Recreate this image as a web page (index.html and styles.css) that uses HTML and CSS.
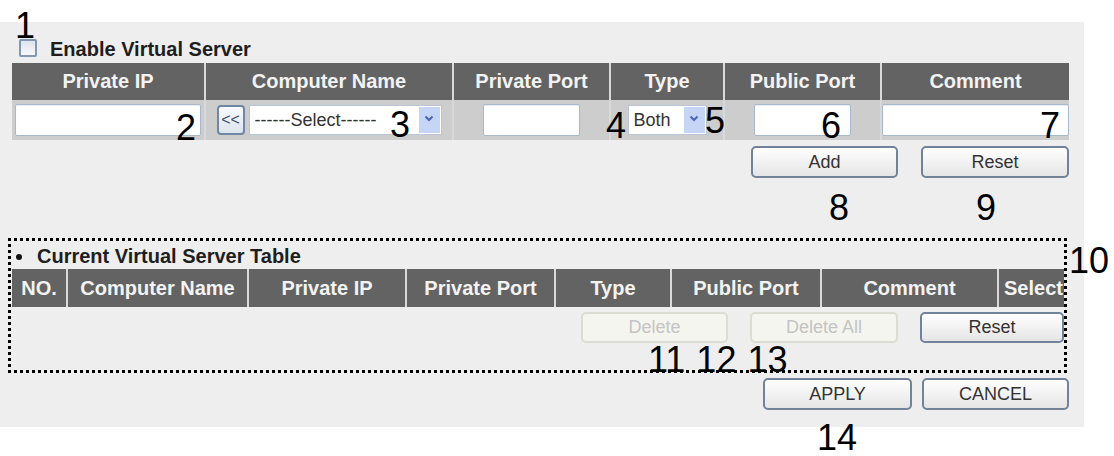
FILE: index.html
```html
<!DOCTYPE html>
<html lang="en">
<head>
    <meta charset="UTF-8">
    <title>Virtual Server</title>
    <link rel="stylesheet" href="styles.css">
</head>
<body>
    <div class="panel">
        <label class="enable"><span class="check"></span> Enable Virtual Server</label>

        <div class="entry">
            <div class="row head">
                <div class="cell w-ip">Private IP</div>
                <div class="cell w-name">Computer Name</div>
                <div class="cell w-port">Private Port</div>
                <div class="cell w-type">Type</div>
                <div class="cell w-pub">Public Port</div>
                <div class="cell w-note">Comment</div>
            </div>
            <div class="row fields">
                <div class="cell w-ip"><input type="text" class="text ip"></div>
                <div class="cell w-name">
                    <button class="back">&lt;&lt;</button>
                    <div class="select name-select">
                        <span class="value">------Select------</span>
                        <span class="arrow"><svg width="10" height="7" viewBox="0 0 10 7"><path d="M1.5 1.5 L5 5 L8.5 1.5" fill="none" stroke="#4568b5" stroke-width="2"/></svg></span>
                    </div>
                </div>
                <div class="cell w-port"><input type="text" class="text port"></div>
                <div class="cell w-type">
                    <div class="select type-select">
                        <span class="value">Both</span>
                        <span class="arrow"><svg width="10" height="7" viewBox="0 0 10 7"><path d="M1.5 1.5 L5 5 L8.5 1.5" fill="none" stroke="#4568b5" stroke-width="2"/></svg></span>
                    </div>
                </div>
                <div class="cell w-pub"><input type="text" class="text port"></div>
                <div class="cell w-note"><input type="text" class="text note"></div>
            </div>
        </div>

        <div class="actions add-actions">
            <button class="btn w147">Add</button>
            <button class="btn w148">Reset</button>
        </div>

        <div class="current">
            <div class="current-title"><span class="dot"></span>Current Virtual Server Table</div>
            <div class="row head list-head">
                <div class="cell l-no">NO.</div>
                <div class="cell l-name">Computer Name</div>
                <div class="cell l-ip">Private IP</div>
                <div class="cell l-port">Private Port</div>
                <div class="cell l-type">Type</div>
                <div class="cell l-pub">Public Port</div>
                <div class="cell l-note">Comment</div>
                <div class="cell l-sel">Select</div>
            </div>
            <div class="actions list-actions">
                <button class="btn small off w147">Delete</button>
                <button class="btn small off w148">Delete All</button>
                <button class="btn small w144">Reset</button>
            </div>
        </div>

        <div class="actions final">
            <button class="btn w149">APPLY</button>
            <button class="btn w147">CANCEL</button>
        </div>
    </div>

    <!-- numbered callouts -->
    <span class="tag t1">1</span>
    <span class="tag t2">2</span>
    <span class="tag t3">3</span>
    <span class="tag t4">4</span>
    <span class="tag t5">5</span>
    <span class="tag t6">6</span>
    <span class="tag t7">7</span>
    <span class="tag t8">8</span>
    <span class="tag t9">9</span>
    <span class="tag t10">10</span>
    <span class="tag t11">11 12 13</span>
    <span class="tag t14">14</span>
</body>
</html>
```

FILE: styles.css
```css
body {
    margin: 0;
    width: 1114px;
    height: 456px;
    overflow: hidden;
    position: relative;
    background: #fff;
    font-family: "Liberation Sans", Arial, sans-serif;
}

.panel {
    margin-top: 22px;
    width: 1084px;
    height: 405px;
    box-sizing: border-box;
    padding: 14px 15px 17px 12px;
    background: #eeeeee;
}

.enable {
    display: flex;
    align-items: flex-start;
    height: 27px;
    margin-left: 7px;
    font-size: 20px;
    font-weight: bold;
    line-height: 27px;
    color: #1e1e1e;
}

/* drawn checkbox, unchecked */
.check {
    flex: none;
    width: 18px;
    height: 18px;
    margin: 3px 13px 0 0;
    box-sizing: border-box;
    border: 2px solid #8196b2;
    border-radius: 2px;
    background: linear-gradient(#dfe4ec, #f7f8fa);
}

.entry {
    width: 1057px;
}

.row {
    display: flex;
}

.cell {
    box-sizing: border-box;
    display: flex;
    align-items: center;
    justify-content: center;
    white-space: nowrap;
}

.cell + .cell {
    border-left: 2px solid #d9d9d9;
}

.head {
    height: 37px;
    background: #636363;
    color: #f3f3f3;
    font-size: 20px;
    font-weight: bold;
}

.fields {
    height: 40px;
    background: #cdcdcd;
}

.w-ip { width: 192px; }
.w-name { width: 248px; gap: 4px; }
.w-port { width: 157px; }
.w-type { width: 114px; }
.w-pub { width: 157px; }
.w-note { width: 189px; }

.text {
    height: 32px;
    box-sizing: border-box;
    margin: 0;
    border: 1px solid #a9b9cd;
    border-radius: 2px;
    background: #fff;
    box-shadow: inset 0 1px 1px rgba(0, 0, 0, 0.08);
}

.text.ip { width: 186px; }
.text.port { width: 97px; }
.text.note { width: 187px; }

.back {
    width: 28px;
    height: 30px;
    padding: 0;
    box-sizing: border-box;
    border: 2px solid #6f87a3;
    border-radius: 4px;
    background: linear-gradient(#f8fafc, #dde4ee);
    font: 16px "Liberation Sans", Arial, sans-serif;
    color: #3c4c66;
}

.select {
    display: flex;
    height: 30px;
    box-sizing: border-box;
    border: 1px solid #b8c6d8;
    background: #fff;
    font-size: 18px;
    color: #333;
}

.select .value {
    flex: 1;
    padding-left: 5px;
    line-height: 28px;
}

.select .arrow {
    width: 21px;
    margin: 1px;
    display: flex;
    align-items: flex-start;
    justify-content: center;
    padding-top: 8px;
    box-sizing: border-box;
    background: #c6d5f5;
}

.name-select { width: 193px; }
.type-select { width: 79px; }

.actions {
    display: flex;
    justify-content: flex-end;
}

.add-actions {
    gap: 23px;
    margin-top: 6px;
}

.btn {
    height: 32px;
    padding: 0;
    box-sizing: border-box;
    border: 2px solid #70839a;
    border-radius: 5px;
    background: linear-gradient(#ffffff, #e5e5e5);
    font: 18px "Liberation Sans", Arial, sans-serif;
    color: #333;
}

.btn.small { height: 31px; }

.btn.off {
    border-color: #dcdcd2;
    background: #f5f5ef;
    color: #c4c4c4;
}

.w144 { width: 144px; }
.w147 { width: 147px; }
.w148 { width: 148px; }
.w149 { width: 149px; }

.current {
    width: 1059px;
    height: 135px;
    margin: 60px 0 0 -4px;
    box-sizing: border-box;
    border: 3px dotted #000;
    padding-left: 1px;
}

.current-title {
    height: 28px;
    display: flex;
    align-items: center;
    padding-top: 3px;
    box-sizing: border-box;
    font-size: 20px;
    font-weight: bold;
    color: #1e1e1e;
}

.dot {
    width: 6px;
    height: 6px;
    margin: 0 15px 0 4px;
    border-radius: 50%;
    background: #111;
}

.list-head {
    height: 38px;
    width: 1052px;
}

.l-no { width: 54px; }
.l-name { width: 181px; }
.l-ip { width: 158px; }
.l-port { width: 149px; }
.l-type { width: 116px; }
.l-pub { width: 150px; }
.l-note { width: 177px; }
.l-sel { width: 67px; justify-content: flex-start; padding-left: 5px; overflow: hidden; }

.list-actions {
    gap: 22px;
    margin-top: 5px;
}

.final {
    gap: 10px;
    margin-top: 5px;
}

.tag {
    position: absolute;
    font-size: 36px;
    line-height: 32px;
    color: #000;
    white-space: pre;
}

.t1 { left: 15px; top: 10px; }
.t2 { left: 176px; top: 112px; }
.t3 { left: 390px; top: 109px; }
.t4 { left: 606px; top: 110px; }
.t5 { left: 705px; top: 105px; }
.t6 { left: 821px; top: 110px; }
.t7 { left: 1040px; top: 110px; }
.t8 { left: 829px; top: 192px; }
.t9 { left: 976px; top: 192px; }
.t10 { left: 1069px; top: 245px; }
.t11 { left: 648px; top: 344px; word-spacing: 1px; }
.t14 { left: 817px; top: 422px; }
```
